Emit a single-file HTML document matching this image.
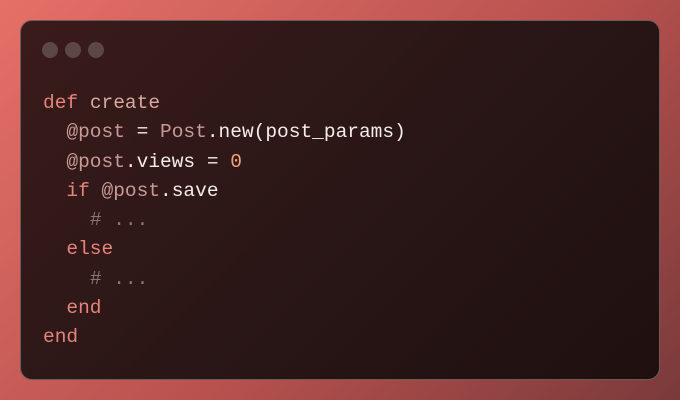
<!DOCTYPE html>
<html><head><style>
html,body{margin:0;padding:0;}
body{width:680px;height:400px;overflow:hidden;background:linear-gradient(135deg,#e57068 0%,#b9524f 55%,#7a3a3a 100%);position:relative;}
.win{position:absolute;left:20px;top:20px;width:638px;height:358px;border-radius:12px;border:1px solid #6e5a58;background:linear-gradient(135deg,#3a1b1b 0%,#2a1616 50%,#1f1010 100%);}
.dot{position:absolute;top:21px;width:16px;height:16px;border-radius:50%;background:#5c4646;}
pre{position:absolute;left:22px;top:68px;margin:0;font-family:"Liberation Mono",monospace;font-size:19.5px;line-height:29.3px;color:#f3eceb;}
.k{color:#e5847a}.f{color:#d9a9a4}.i{color:#c89a96}.n{color:#f0a278}.c{color:#8a7573}
</style></head><body>
<div class="win">
<div class="dot" style="left:21px"></div><div class="dot" style="left:44px"></div><div class="dot" style="left:67px"></div>
<pre><span class="k">def</span> <span class="f">create</span>
  <span class="i">@post</span> = <span class="i">Post</span>.new(post_params)
  <span class="i">@post</span>.views = <span class="n">0</span>
  <span class="k">if</span> <span class="i">@post</span>.save
    <span class="c"># ...</span>
  <span class="k">else</span>
    <span class="c"># ...</span>
  <span class="k">end</span>
<span class="k">end</span></pre>
</div>
</body></html>
